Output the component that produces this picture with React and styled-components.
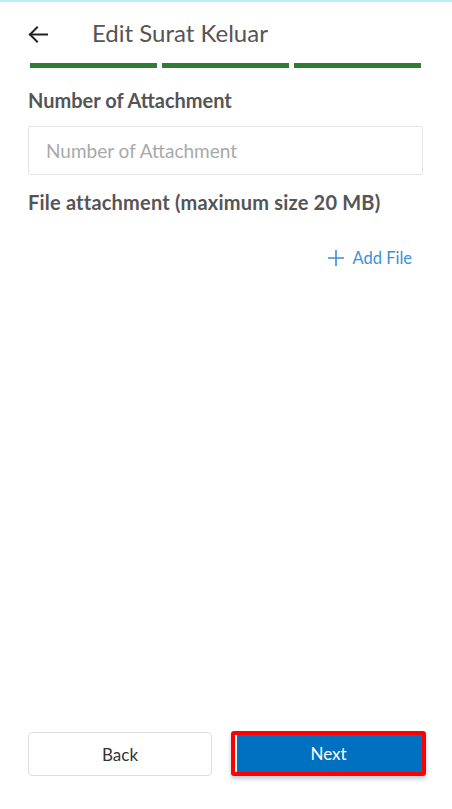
import React from "react";
import styled, { createGlobalStyle } from "styled-components";

const Global = createGlobalStyle`
  html, body { margin: 0; padding: 0; background: #fff; }
  body { font-family: Lato, "Noto Sans", sans-serif; }
  * { box-sizing: border-box; }
`;

const Page = styled.div`
  min-height: 809px;
  display: flex;
  flex-direction: column;
  background: #fff;
  border-top: 2px solid #b5eef8;
`;

const Header = styled.header`
  height: 61px;
  display: flex;
  align-items: center;
  padding: 0 0 0 28px;
  gap: 44px;
`;

const BackIcon = styled.button`
  border: 0;
  background: none;
  padding: 0;
  margin-top: 4px;
  display: flex;
  align-items: center;
  color: #222;
`;

const Title = styled.h1`
  margin: 0;
  font-size: 24px;
  font-weight: 400;
  color: #555;
  margin-top: -1px;
`;

const Steps = styled.div`
  display: grid;
  grid-template-columns: repeat(3, 1fr);
  gap: 5px;
  padding: 0 31px 0 30px;
`;

const Step = styled.div`
  height: 5px;
  background: ${(p) => (p.$done ? "#2e7d32" : "#ddd")};
`;

const Content = styled.main`
  flex: 1;
  padding: 21px 29px 0 28px;
  display: flex;
  flex-direction: column;
`;

const Label = styled.label`
  font-size: 20px;
  font-weight: 700;
  color: #555;
  line-height: 22px;
  letter-spacing: ${(p) => (p.$wide ? "0.2px" : "0")};
`;

const Input = styled.input`
  margin-top: 15px;
  height: 49px;
  width: 100%;
  border: 1px solid #e6e6e6;
  border-radius: 2px;
  padding: 0 17px;
  font-family: inherit;
  font-size: 19px;
  color: #333;
  outline: none;
  margin-bottom: 16px;
  &::placeholder { color: #a9a9a9; }
`;

const AddRow = styled.div`
  display: flex;
  justify-content: flex-end;
  margin-top: 35px;
  padding-right: 11px;
`;

const AddButton = styled.button`
  border: 0;
  background: none;
  padding: 0;
  display: flex;
  align-items: center;
  gap: 8px;
  font-family: inherit;
  font-size: 16.5px;
  color: #3b8fd6;
`;

const Footer = styled.footer`
  display: grid;
  grid-template-columns: 184px 195px;
  justify-content: space-between;
  padding: 0 26px 33px 28px;
`;

const BackBtn = styled.button`
  height: 44px;
  background: #fff;
  border: 1px solid #dedede;
  border-radius: 4px;
  font-family: inherit;
  font-size: 17px;
  color: #333;
  margin-top: 1px;
`;

const NextBtn = styled.button`
  height: 45px;
  background: #0070c0;
  border: 4px solid #ff0000;
  border-radius: 3px;
  box-shadow: inset 2px 0 0 #fff, 0 3px 4px rgba(0, 60, 120, 0.25);
  font-family: inherit;
  font-size: 17px;
  color: #fff;
`;

export default function App() {
  return (
    <>
      <Global />
      <Page>
        <Header>
          <BackIcon aria-label="back">
            <svg width="20" height="17" viewBox="0 0 20 17" fill="none" stroke="currentColor" strokeWidth="2" strokeLinecap="square">
              <path d="M19 8.5H2" />
              <path d="M9 1.5L2 8.5l7 7" strokeLinejoin="miter" />
            </svg>
          </BackIcon>
          <Title>Edit Surat Keluar</Title>
        </Header>
        <Steps>
          <Step $done />
          <Step $done />
          <Step $done />
        </Steps>
        <Content>
          <Label>Number of Attachment</Label>
          <Input placeholder="Number of Attachment" />
          <Label $wide>File attachment (maximum size 20 MB)</Label>
          <AddRow>
            <AddButton>
              <svg width="16" height="16" viewBox="0 0 16 16" stroke="currentColor" strokeWidth="1.6">
                <path d="M8 0v16M0 8h16" />
              </svg>
              Add File
            </AddButton>
          </AddRow>
        </Content>
        <Footer>
          <BackBtn>Back</BackBtn>
          <NextBtn>Next</NextBtn>
        </Footer>
      </Page>
    </>
  );
}
